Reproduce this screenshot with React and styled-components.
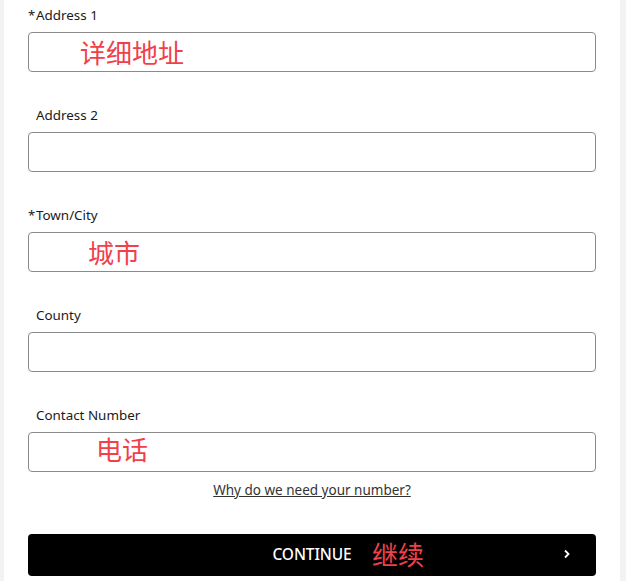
import styled, { createGlobalStyle } from "styled-components"

const Global = createGlobalStyle`
  html, body {
    margin: 0;
    padding: 0;
    background: #f2f3f5;
  }
`

const fields = [
  { label: "Address 1", required: true, note: "详细地址", noteLeft: 51, noteTop: 2 },
  { label: "Address 2" },
  { label: "Town/City", required: true, note: "城市", noteLeft: 59, noteTop: 2 },
  { label: "County" },
  { label: "Contact Number", note: "电话", noteLeft: 67, noteTop: -1 },
]

export default function App() {
  return (
    <>
      <Global />
      <Page>
        <Panel>
          {fields.map((f) => (
            <Field key={f.label}>
              <Label>
                <Star>{f.required ? "*" : ""}</Star>
                {f.label}
              </Label>
              <Box>
                {f.note && (
                  <Note $left={f.noteLeft} $top={f.noteTop}>
                    {f.note}
                  </Note>
                )}
              </Box>
            </Field>
          ))}
          <WhyLink href="#">Why do we need your number?</WhyLink>
          <ContinueButton>
            <ButtonText>CONTINUE</ButtonText>
            <ButtonNote>继续</ButtonNote>
            <Chevron viewBox="0 0 8 10" width="8" height="10">
              <path d="M2 1.5 L5.5 5 L2 8.5" fill="none" stroke="#fff" strokeWidth="1.8" />
            </Chevron>
          </ContinueButton>
        </Panel>
      </Page>
    </>
  )
}

const Page = styled.div`
  padding: 0 6px 0 4px;
  height: 581px;
  overflow: hidden;
`
const Panel = styled.div`
  background: #fff;
  height: 581px;
  padding: 5px 24px 0 24px;
  box-sizing: border-box;
  display: flex;
  flex-direction: column;
`
const Field = styled.div`
  display: flex;
  flex-direction: column;
  height: 100px;
`
const Label = styled.div`
  font-family: "Noto Sans", "Open Sans", sans-serif;
  font-size: 13.4px;
  color: #1a1a1a;
  height: 20px;
  line-height: 20px;
  margin-bottom: 7px;
  display: flex;
`
const Star = styled.span`
  width: 8px;
  font-size: 13px;
`
const Box = styled.div`
  position: relative;
  height: 38px;
  border: 1px solid #8a8a8a;
  border-radius: 4px;
  background: #fff;
`
const Note = styled.span`
  position: absolute;
  left: ${(p) => p.$left}px;
  top: ${(p) => p.$top}px;
  font-family: "Noto Sans CJK SC", sans-serif;
  font-size: 26px;
  line-height: 34px;
  color: #f0404a;
`
const WhyLink = styled.a`
  align-self: center;
  margin-top: -24px;
  font-family: "Noto Sans", "Open Sans", sans-serif;
  font-size: 13.5px;
  color: #333;
  text-decoration: underline;
  line-height: 18px;
`
const ContinueButton = styled.button`
  margin-top: 35px;
  height: 42px;
  border: none;
  border-radius: 4px;
  background: #000;
  position: relative;
  display: flex;
  align-items: center;
  justify-content: center;
  padding: 0 0 3px 0;
`
const ButtonText = styled.span`
  font-family: "Noto Sans", "Open Sans", sans-serif;
  font-size: 15.5px;
  font-weight: 500;
  color: #fff;
  letter-spacing: -0.1px;
`
const ButtonNote = styled.span`
  position: absolute;
  left: 344px;
  top: 2px;
  font-family: "Noto Sans CJK SC", sans-serif;
  font-size: 26px;
  line-height: 36px;
  color: #f0404a;
`
const Chevron = styled.svg`
  position: absolute;
  right: 25px;
  top: 15px;
`
